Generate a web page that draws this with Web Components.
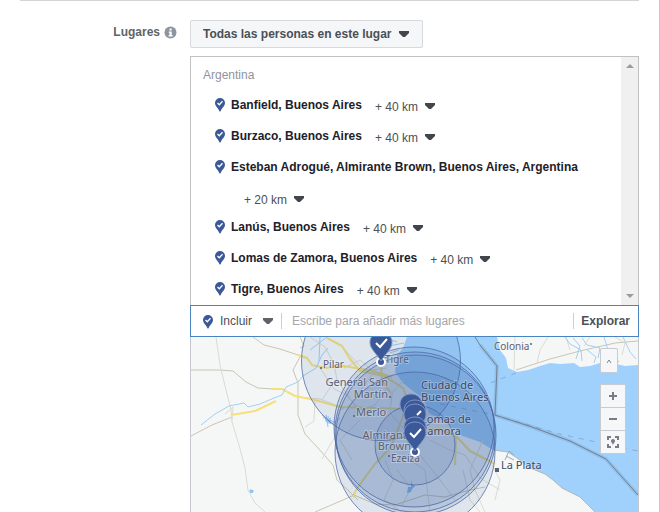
<!DOCTYPE html>
<html lang="es">
<head>
<meta charset="utf-8">
<title>Lugares</title>
<style>
  body { margin: 0; background: #fff; font: 12px/18px "Liberation Sans", Arial, sans-serif; color: #4b4f56; }
</style>
</head>
<body>
<targeting-panel>
  <audience-field>
    <place-list slot="places" country="Argentina">
      <place-row radius="40">Banfield, Buenos Aires</place-row>
      <place-row radius="40">Burzaco, Buenos Aires</place-row>
      <place-row radius="20">Esteban Adrogué, Almirante Brown, Buenos Aires, Argentina</place-row>
      <place-row radius="40">Lanús, Buenos Aires</place-row>
      <place-row radius="40">Lomas de Zamora, Buenos Aires</place-row>
      <place-row radius="40">Tigre, Buenos Aires</place-row>
    </place-list>
    <place-search slot="search"></place-search>
    <place-map slot="map"></place-map>
  </audience-field>
</targeting-panel>

<script>
const controls = `
  * { box-sizing: border-box; }
  button, select, input { font: inherit; color: inherit; margin: 0; border: 0; background: none; padding: 0; outline: 0; }
  select { appearance: none; cursor: pointer; grid-area: 1 / 1; }
  button { cursor: pointer; }
  .drop { display: inline-grid; align-items: center; }
  .caret { grid-area: 1 / 1; justify-self: end; pointer-events: none; width: 12px; height: 7px; fill: #41454c; }
`;
const caret = `<svg class="caret" viewBox="0 0 12 7" aria-hidden="true"><path d="M1 0H11V2L7 6H5L1 2Z"/></svg>`;

function define(name, html, setup) {
  const template = document.createElement('template');
  template.innerHTML = html;
  customElements.define(name, class extends HTMLElement {
    constructor() {
      super();
      this.attachShadow({ mode: 'open' }).append(template.content.cloneNode(true));
    }
    connectedCallback() { if (setup) setup(this, this.shadowRoot); }
  });
}

define('targeting-panel', `
  <style>
    :host { display: flex; flex-direction: column; box-sizing: border-box; min-height: 100vh; padding: 0 20px; border-right: 1px solid #c9c9c9; }
    hr { width: 100%; margin: 0 0 19px; border: 0; border-top: 1px solid #d4d4d4; }
    ::slotted(*) { flex: 1; }
  </style>
  <hr><slot></slot>`);

define('place-pin', `
  <style>
    :host { display: block; width: 10px; height: 14px; flex: none; }
    svg { display: block; }
  </style>
  <svg width="10" height="14" viewBox="0 0 10 14" aria-hidden="true">
    <path fill="#3b5998" d="M5 0A5 5 0 0 0 0 5C0 8 3 9.800 4.300 13Q5 14 5.700 13C7 9.800 10 8 10 5A5 5 0 0 0 5 0Z"/>
    <path d="M2.500 5 4.300 6.800 7.500 3.300" fill="none" stroke="#fff" stroke-width="1.300"/>
  </svg>`);

define('audience-field', `
  <style>${controls}
    :host { display: grid; grid-template-columns: 157px minmax(0, 1fr); column-gap: 13px; }
    .label { display: flex; justify-content: flex-end; align-items: center; gap: 4px; height: 24px; font-weight: bold; color: #606469; }
    .main { display: flex; flex-direction: column; align-items: stretch; }
    .drop { align-self: flex-start; margin-bottom: 8px; }
    .drop select { height: 28px; padding: 0 30px 0 12px; font-weight: bold; background: #f5f6f8; border: 1px solid #d6d9dd; border-radius: 2px; }
    .drop .caret { margin-right: 13px; }
    slot[name=map] { display: flex; flex: 1; }
    ::slotted(place-map) { flex: 1; }
  </style>
  <div class="label">
    <label for="who">Lugares</label>
    <svg width="13" height="13" viewBox="0 0 13 13" aria-hidden="true"><circle cx="6.500" cy="6.500" r="6" fill="#8d949e"/><path fill="#fff" d="M5.500 2.500h2.200v2H5.500zM4.700 5.400h3v3.800h1v1.300H4.500V9.200h1V6.700h-.8z"/></svg>
  </div>
  <div class="main">
    <div class="drop"><select id="who"><option>Todas las personas en este lugar</option></select>${caret}</div>
    <slot name="places"></slot>
    <slot name="search"></slot>
    <slot name="map"></slot>
  </div>`);

define('place-list', `
  <style>${controls}
    :host { display: flex; box-sizing: border-box; border: 1px solid #bfc1c4; border-bottom: 0; }
    .items { flex: 1; min-width: 0; padding: 9px 12px 0; }
    .country { margin-bottom: 6px; color: #90949c; }
    .rail { display: flex; flex-direction: column; justify-content: space-between; width: 17px; background: #f0f0f0; }
    button { height: 18px; display: grid; place-items: center; }
    svg { fill: #9b9b9b; }
  </style>
  <div class="items"><div class="country"></div><slot></slot></div>
  <div class="rail">
    <button aria-label="Subir"><svg width="8" height="4"><path d="M0 4 4 0 8 4Z"/></svg></button>
    <button aria-label="Bajar"><svg width="8" height="4"><path d="M0 0H8L4 4Z"/></svg></button>
  </div>`, (host, root) => {
    root.querySelector('.country').textContent = host.getAttribute('country');
  });

define('place-row', `
  <style>${controls}
    :host { display: flex; gap: 6px; padding-left: 12px; }
    place-pin { margin-top: 8px; }
    .text { display: flex; flex-wrap: wrap; flex: 1; }
    .name { font-weight: bold; color: #1d2129; line-height: 31px; }
    .drop { margin-left: 13px; height: 29px; padding-top: 4px; }
    select { padding-right: 17px; }
  </style>
  <place-pin></place-pin>
  <div class="text">
    <span class="name"><slot></slot></span>
    <span class="drop"><select aria-label="Radio"><option></option></select>${caret}</span>
  </div>`, (host, root) => {
    root.querySelector('option').textContent = '+ ' + host.getAttribute('radius') + ' km';
  });

define('place-search', `
  <style>${controls}
    :host { display: flex; align-items: center; box-sizing: border-box; height: 32px; padding: 0 8px 0 12px; border: 1px solid #4a84bf; background: #fff; }
    place-pin { margin: 2px 7px 0 0; }
    .drop select { width: 54px; }
    .drop .caret { fill: #5f6369; }
    input { flex: 1; min-width: 0; height: 16px; margin-left: 7px; padding-left: 10px; border-left: 1px solid #ccced2; border-right: 1px solid #ccced2; }
    input::placeholder { color: #a3a6ab; opacity: 1; }
    button { margin-left: 7px; font-weight: bold; }
  </style>
  <place-pin></place-pin>
  <span class="drop"><select aria-label="Incluir o excluir"><option>Incluir</option></select>${caret}</span>
  <input type="text" aria-label="Lugares" placeholder="Escribe para añadir más lugares">
  <button>Explorar</button>`);

define('place-map', `
  <style>${controls}
    :host { display: block; position: relative; min-height: 175px; border: 1px solid #c5c8cf; border-width: 0 1px; box-sizing: border-box; overflow: hidden; background: #f5f7f6; }
    .map { position: absolute; inset: 0; width: 100%; height: 100%; }
    .tools { position: absolute; top: 11px; right: 12px; width: 26px; display: flex; flex-direction: column; }
    button { height: 24px; background: #f6f7f9; border: 1px solid #c8ccd2; display: grid; place-items: center; margin-top: -1px; }
    .tilt { width: 18px; height: 25px; margin: 0 0 12px; border-radius: 2px; }
    .road { fill: none; stroke: #c9c6b2; stroke-width: 1; }
    .minor { fill: none; stroke: #dbdad3; stroke-width: 1; }
    .highway { fill: none; stroke: #f5e07a; stroke-width: 2; stroke-linejoin: round; }
    .river { fill: none; stroke: #a2cff6; stroke-width: 1; }
    .range { fill: #3a62a8; fill-opacity: .12; stroke: #4a65a3; stroke-width: 1; stroke-opacity: .75; }
    text { font-family: "Noto Sans", sans-serif; fill: #5a6075; stroke: #fff; stroke-opacity: .25; stroke-width: 2px; paint-order: stroke; }
    .big { font-size: 11px; }
    .city { fill: #404864; }
    .mid { font-size: 10px; }
    .end { text-anchor: end; }
    .pin { fill: #3b5998; stroke: #8096c4; stroke-width: 1; }
    .tick { fill: none; stroke: #fff; stroke-width: 2; }
    .spot { fill: #3b5998; stroke: #fff; stroke-width: 2; }
  </style>
  <svg class="map" viewBox="191 337 447 175" preserveAspectRatio="xMinYMin slice" role="img" aria-label="Mapa de Buenos Aires">
    <defs>
      <path id="pin" d="M0-29C-6-29-11-25-11-18.500C-11-12-4-7 0 0C4-7 11-12 11-18.500C11-25 6-29 0-29Z"/>
    </defs>
    <path fill="#a0d1fc" d="M407 337 403 348 397 355 395 372 403 383 413 391 423 398 429 413 447 423 460 435 480 442 493 450 508 452 517 458 530 468 545 474 553 480 562 488 580 497 595 512H638V365L625 366 616 364 604 365 600 363 590 366 580 367 574 363 560 364 550 363 540 366 528 370 517 372 508 368 506 358 500 350 497 337Z"/>
    <path fill="none" stroke="#b3b7ba" d="M493 450 508 452 517 458 530 468 545 474 553 480 562 488 580 497 595 512"/>
    <path fill="none" stroke="#98a9b9" d="M505 460 509 451 514 455M506 456 514 460"/>
    <path class="road" d="M191 370H219L233 371 246 382 258 388 273 389M253 337 264 345 280 349 298 355 308 358M300 337 304 346 300 348M301 355 293 370 298 383 298 415 305 434 318 448 333 465 337 480 350 492 358 500M191 436 212 425 232 417 M315 512 343 500 354 495 M354 495 375 504 395 505 425 495 445 497 470 490 485 487"/>
    <path class="minor" d="M216 337 220 365 226 390 231 410 232 422 239 445 245 468 248 490 255 503 265 512M225 414 233 407 232 420M305 427 314 421 315 400M322 459 330 445 337 434M310 337 325 347 334 364 337 380 358 410M344 368 360 360 374 372 350 405 340 410M318 365 334 389 345 394 360 410 375 405 388 387M345 350 365 371 387 368M335 380 322 400M360 420 340 440 352 460 M385 460 393 480 384 500 402 512M404 380 392 393 390 413 405 430M430 440 450 450 465 455 480 478 500 490M420 455 440 480 455 500M397 470 411 488 402 505M463 470 470 500 480 512M410 460 425 470 430 512M483 440 470 470 475 490 485 512M298 397 320 399 341 407M495 500 500 480 492 465"/>
    <path class="road" d="M516 370 550 359 580 351 615 343 638 341"/>
    <path class="minor" d="M515 337 514 370M548 337 540 350 537 363M566 337 570 350M615 337 625 343 622 355M590 337 584 346"/>
    <path class="highway" d="M231 415 255 411 276 401 M272 389H282L295 396 315 400 340 407 375 408 405 409M298 355 307 358 312 365 325 368 344 366 373 371 392 377M327 338 342 346 350 359 360 371 384 376 403 388 408 402M381 364 382 380 391 393M405 410 401 422 391 447 374 465 356 490 353 497M417 430 440 429 457 437 470 451 495 464M456 437 455 465"/>
    <path class="river" d="M201 425 215 414 229 406 244 403 248 407 260 404 274 398 282 395 286 387 298 382 303 376 316 368 322 355 328 348M320 337 319 361M327 337 310 350M387 338 397 342M389 346 404 343M390 353 399 350M340 418 332 424"/>
    <path class="river" d="M565 337 570 344 581 350 582 361M582 338 587 345 600 348 598 358M573 338 580 346 576 359M604 337 608 350 619 362M623 337 630 352 636 359M586 349 596 357 594 363"/>
    <path fill="none" stroke="#8fc5f5" d="M322 415 333 424M325 421 331 418M323 418 329 417M326 415 328 427M330 420 334 422M251 489V493M249 491H254"/>
    <path fill="#8fc5f5" d="M324 417 331 420 331 424 327 423ZM250 490H253V493H250Z"/>
    <path fill="#80bdf2" d="M411 480 412 484 415 486 412 489 411 492 407 493 408 487 411 487Z"/>
    <path fill="none" stroke="#758bad" stroke-dasharray="5 6" stroke-opacity=".55" d="M516 373 485 385M440 404 490 414 560 434 600 443 638 451"/>
    <path fill="none" stroke="#6e8fad" stroke-opacity=".25" stroke-width="4" d="M480 345 497 366 495 415 532 427 570 441 606 459 638 495"/>
    <path fill="none" stroke="#6f7f93" d="M475 337 480 345 497 366 495 415 532 427 570 441 606 459 638 495"/>
    <circle class="range" cx="381" cy="361" r="79.500"/>
    <circle class="range" cx="414" cy="427" r="80"/>
    <circle class="range" cx="415" cy="432" r="80"/>
    <circle class="range" cx="416" cy="435" r="80"/>
    <circle class="range" cx="415" cy="452" r="80"/>
    <circle class="range" cx="415" cy="445" r="40"/>
    <g fill="#5b6070"><circle cx="321" cy="368" r="1"/><circle cx="354" cy="416" r="1"/><circle cx="390" cy="397" r="1"/><circle cx="389" cy="456" r="1"/><circle cx="531" cy="344" r="1"/><path d="M495 468h4v4h-4z"/></g>
    <text class="mid" x="323" y="368">Pilar</text>
    <text class="mid" x="385" y="363">Tigre</text>
    <text class="big end" x="388" y="386">General San</text>
    <text class="big end" x="388" y="398">Martín</text>
    <text class="big" x="356" y="416">Merlo</text>
    <text class="big end" x="413" y="439">Almirante</text>
    <text class="big end" x="411" y="450">Brown</text>
    <text class="mid" x="391" y="462">Ezeiza</text>
    <text class="big city" x="421" y="389">Ciudad de</text>
    <text class="big city" x="421" y="401">Buenos Aires</text>
    <text class="big city" x="421" y="423">Lomas de</text>
    <text class="big city" x="421" y="435">Zamora</text>
    <text class="mid" x="494" y="350">Colonia</text>
    <text class="big city" x="501" y="469">La Plata</text>
    <circle class="spot" cx="381" cy="362" r="4"/>
    <use href="#pin" class="pin" x="381" y="361"/>
    <path class="tick" d="M376 343 380 347 387 339"/>
    <use href="#pin" class="pin" x="411" y="423"/>
    <use href="#pin" class="pin" x="415" y="429"/>
    <use href="#pin" class="pin" x="415" y="433"/>
    <path class="tick" d="M417 415 421 411"/>
    <use href="#pin" class="pin" x="415" y="446"/>
    <circle class="spot" cx="415" cy="452" r="4"/>
    <use href="#pin" class="pin" x="415" y="451"/>
    <path class="tick" d="M410 433 414 437 421 429"/>
  </svg>
  <div class="tools">
    <button class="tilt" aria-label="Contraer"><svg width="6" height="4"><path d="M1 4 3 1 5 4" fill="none" stroke="#7f858e"/></svg></button>
    <button aria-label="Acercar"><svg width="8" height="8"><path d="M3 0H5V3H8V5H5V8H3V5H0V3H3Z" fill="#777d87"/></svg></button>
    <button aria-label="Alejar"><svg width="8" height="2"><path d="M0 0H8V2H0Z" fill="#777d87"/></svg></button>
    <button aria-label="Centrar"><svg width="12" height="12"><path d="M1 4V1H4M8 1H11V4M11 8V11H8M4 11H1V8" fill="none" stroke="#777d87" stroke-width="2"/><path d="M6 3C4.500 3 4 4 4 5 4 6.500 5.500 7 6 9 6.500 7 8 6.500 8 5 8 4 7.500 3 6 3Z" fill="#777d87"/></svg></button>
  </div>`);
</script>
</body>
</html>
